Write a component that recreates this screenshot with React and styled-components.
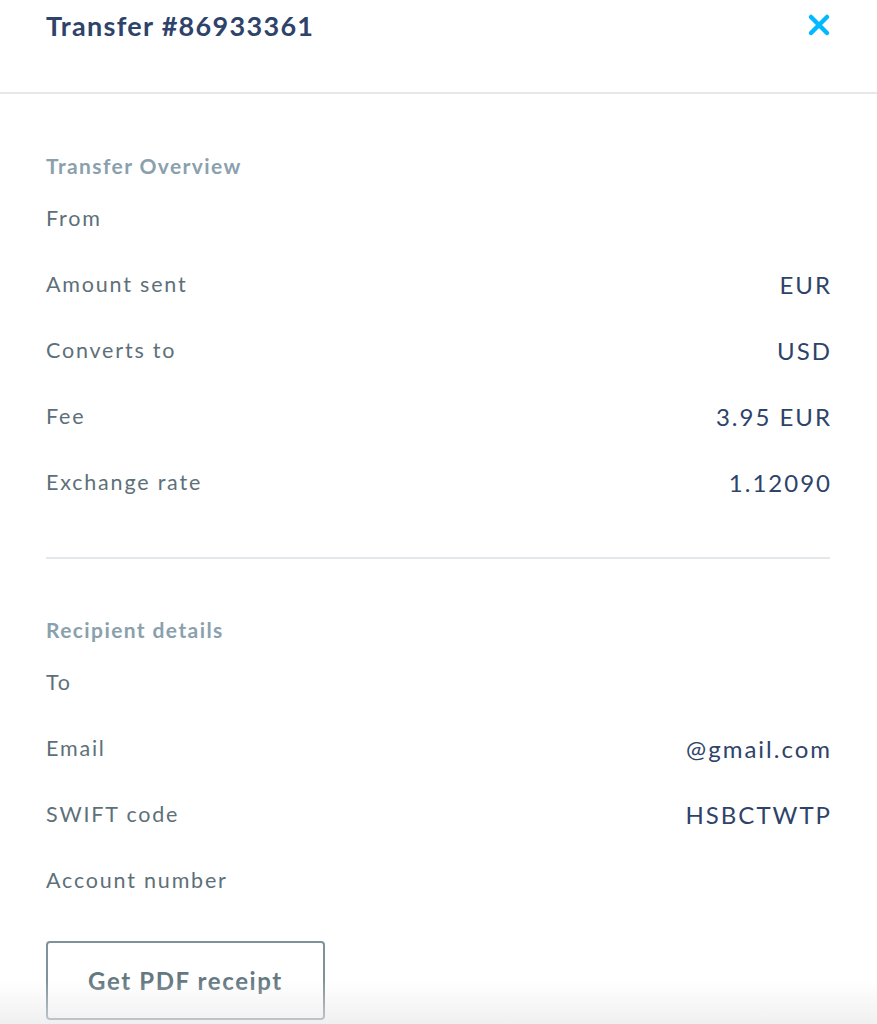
import React from 'react';
import styled, { createGlobalStyle } from 'styled-components';

const GlobalStyle = createGlobalStyle`
  html, body {
    margin: 0;
    padding: 0;
    background: #ffffff;
  }
  body {
    font-family: Lato, "Open Sans", sans-serif;
    -webkit-font-smoothing: antialiased;
  }
`;

const Modal = styled.div`
  position: relative;
  width: 877px;
  height: 1024px;
  overflow: hidden;
  background: #ffffff;
`;

const Header = styled.header`
  display: flex;
  justify-content: space-between;
  align-items: flex-start;
  height: 92px;
  padding: 0 47px 0 46px;
  border-bottom: 2px solid #e4e8eb;
`;

const Title = styled.h1`
  margin: 8px 0 0;
  font-size: 27px;
  line-height: 36px;
  font-weight: 700;
  color: #2e4369;
  letter-spacing: 1.3px;
`;

const CloseButton = styled.button`
  display: flex;
  align-items: center;
  justify-content: center;
  margin-top: 12px;
  margin-right: -2px;
  padding: 0;
  width: 26px;
  height: 26px;
  border: none;
  background: none;
  cursor: pointer;
`;

const Body = styled.div`
  padding: 50px 47px 0 46px;
`;

const Section = styled.section`
  display: flex;
  flex-direction: column;
`;

const SectionTitle = styled.h2`
  margin: 0 0 -3px;
  font-size: 21px;
  line-height: 44px;
  font-weight: 700;
  color: #8aa1ad;
  letter-spacing: 1.4px;
`;

const Row = styled.div`
  display: flex;
  justify-content: space-between;
  align-items: center;
  height: 66px;
`;

const Label = styled.span`
  font-size: 21.5px;
  color: #5d7079;
  letter-spacing: 1.8px;
`;

const Value = styled.span`
  font-size: 24px;
  color: #2e4369;
  letter-spacing: 2px;
  margin-right: -2px;
`;

const Divider = styled.hr`
  margin: 42px 0 49px;
  border: none;
  border-top: 2px solid #e4e8eb;
`;

const ReceiptButton = styled.button`
  margin-top: 28px;
  width: 279px;
  height: 79px;
  border: 2px solid #7f929b;
  border-radius: 4px;
  background: transparent;
  font-family: Lato, "Open Sans", sans-serif;
  font-size: 24px;
  font-weight: 700;
  color: #647882;
  letter-spacing: 1.6px;
  cursor: pointer;
`;

const BottomFade = styled.div`
  position: absolute;
  left: 0;
  right: 0;
  bottom: 0;
  height: 44px;
  pointer-events: none;
  background: linear-gradient(to bottom, rgba(236, 236, 236, 0), rgba(232, 232, 232, 0.65));
`;

const overview = [
  ['From', ''],
  ['Amount sent', 'EUR'],
  ['Converts to', 'USD'],
  ['Fee', '3.95 EUR'],
  ['Exchange rate', '1.12090'],
];

const recipient = [
  ['To', ''],
  ['Email', '@gmail.com'],
  ['SWIFT code', 'HSBCTWTP'],
  ['Account number', ''],
];

function CloseIcon() {
  return (
    <svg width="24" height="24" viewBox="0 0 24 24">
      <path d="M4 4 L20 20 M20 4 L4 20" stroke="#00b9ff" strokeWidth="4.5" strokeLinecap="round" />
    </svg>
  );
}

export default function App() {
  return (
    <Modal>
      <GlobalStyle />
      <Header>
        <Title>Transfer #86933361</Title>
        <CloseButton aria-label="Close">
          <CloseIcon />
        </CloseButton>
      </Header>
      <Body>
        <Section>
          <SectionTitle>Transfer Overview</SectionTitle>
          {overview.map(([label, value]) => (
            <Row key={label}>
              <Label>{label}</Label>
              <Value>{value}</Value>
            </Row>
          ))}
        </Section>
        <Divider />
        <Section>
          <SectionTitle>Recipient details</SectionTitle>
          {recipient.map(([label, value]) => (
            <Row key={label}>
              <Label>{label}</Label>
              <Value>{value}</Value>
            </Row>
          ))}
        </Section>
        <ReceiptButton>Get PDF receipt</ReceiptButton>
      </Body>
      <BottomFade />
    </Modal>
  );
}
